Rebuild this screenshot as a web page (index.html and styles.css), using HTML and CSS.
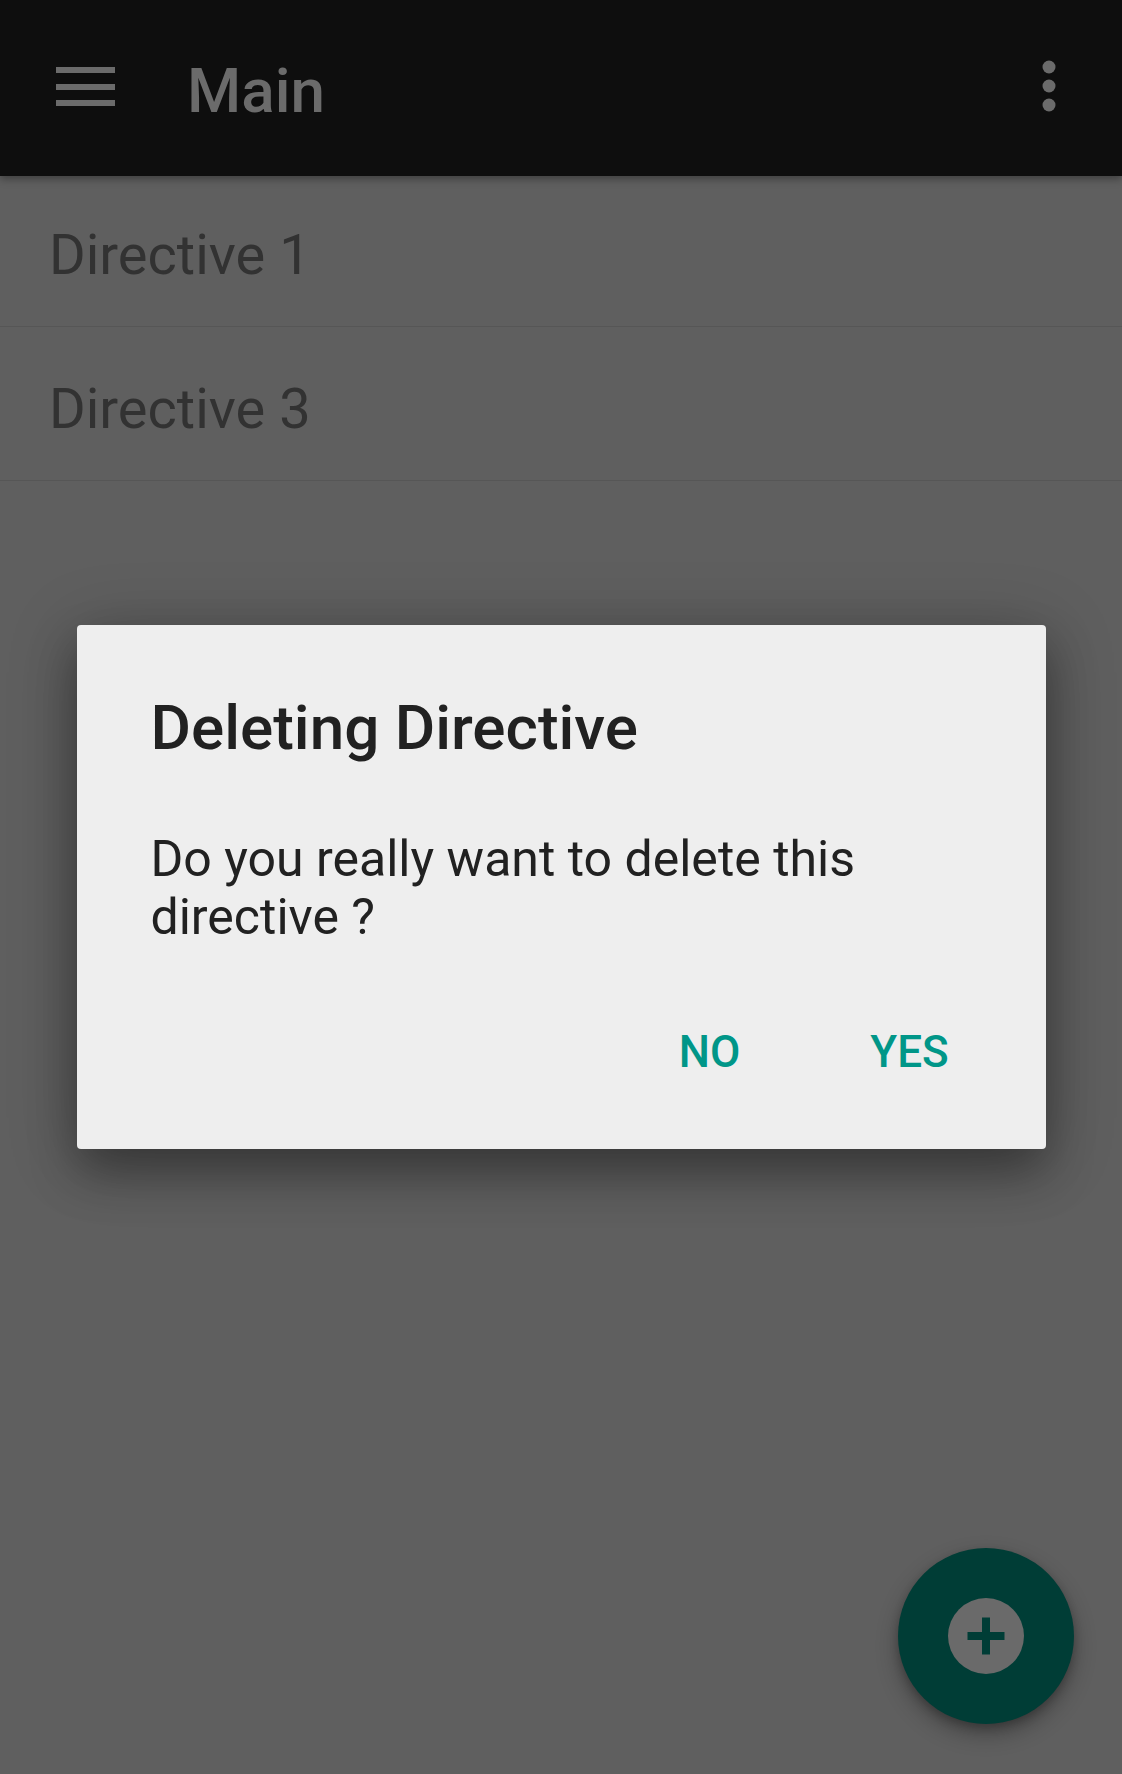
FILE: index.html
```html
<!DOCTYPE html>
<html lang="en">
<head>
<meta charset="utf-8">
<title>Main</title>
<link rel="stylesheet" href="styles.css">
</head>
<body>
<div class="app">
  <header class="toolbar">
    <svg class="menu-icon" width="60" height="40" viewBox="0 0 60 40" aria-hidden="true">
      <rect x="0" y="0" width="59" height="6" fill="#6b6b6b"/>
      <rect x="0" y="17" width="59" height="6" fill="#6b6b6b"/>
      <rect x="0" y="33" width="59" height="6" fill="#6b6b6b"/>
    </svg>
    <h1 class="toolbar-title">Main</h1>
    <svg class="more-icon" width="16" height="54" viewBox="0 0 16 54" aria-hidden="true">
      <circle cx="8" cy="8" r="6.5" fill="#6b6b6b"/>
      <circle cx="8" cy="27" r="6.5" fill="#6b6b6b"/>
      <circle cx="8" cy="46" r="6.5" fill="#6b6b6b"/>
    </svg>
  </header>
  <ul class="list">
    <li class="list-item">Directive 1</li>
    <li class="list-item">Directive 3</li>
  </ul>
</div>

<button class="fab" aria-label="Add">
  <svg width="76" height="76" viewBox="0 0 76 76" aria-hidden="true">
    <circle cx="38" cy="38" r="38" fill="#6a6a6a"/>
    <rect x="19.5" y="34" width="37" height="8" fill="#003d36"/>
    <rect x="34" y="19.5" width="8" height="37" fill="#003d36"/>
  </svg>
</button>

<div class="overlay">
  <div class="dialog" role="dialog">
    <h2 class="dialog-title">Deleting Directive</h2>
    <p class="dialog-body">Do you really want to delete this directive ?</p>
    <div class="dialog-actions">
      <button class="dialog-btn">NO</button>
      <button class="dialog-btn">YES</button>
    </div>
  </div>
</div>
</body>
</html>
```

FILE: styles.css
```css
* {
  box-sizing: border-box;
}

html, body {
  margin: 0;
  padding: 0;
}

body {
  width: 1122px;
  height: 1774px;
  background: #5f5f5f;
  font-family: Roboto, "Noto Sans", "Liberation Sans", sans-serif;
  overflow: hidden;
  position: relative;
}

.app {
  display: flex;
  flex-direction: column;
}

.toolbar {
  position: relative;
  z-index: 2;
  height: 176px;
  background: #0e0e0e;
  display: flex;
  align-items: center;
  padding: 6px 0 0 56px;
  box-shadow: 0 3px 8px rgba(0, 0, 0, 0.35);
}

.menu-icon {
  display: block;
  margin-top: -8px;
}

.toolbar-title {
  margin: 0 0 0 71px;
  font-size: 62px;
  font-weight: 500;
  line-height: 74px;
  color: #6b6b6b;
  flex: 1;
}

.more-icon {
  display: block;
  margin-right: 65px;
  margin-top: -10px;
}

.list {
  list-style: none;
  margin: -3px 0 0 0;
  padding: 0;
}

.list-item {
  height: 154px;
  border-bottom: 1px solid #565656;
  display: flex;
  align-items: center;
  padding: 10px 0 0 49px;
  font-size: 56px;
  line-height: 66px;
  color: #323232;
}

.fab {
  position: absolute;
  right: 48px;
  bottom: 50px;
  width: 176px;
  height: 176px;
  border-radius: 50%;
  border: none;
  padding: 0;
  background: #003d36;
  display: flex;
  align-items: center;
  justify-content: center;
  box-shadow: 0 10px 22px rgba(0, 0, 0, 0.3), 0 4px 8px rgba(0, 0, 0, 0.2);
}

.fab svg {
  display: block;
}

.overlay {
  position: absolute;
  inset: 0;
  z-index: 5;
  display: flex;
  align-items: center;
  justify-content: center;
}

.dialog {
  width: 969px;
  height: 524px;
  background: #eeeeee;
  border-radius: 4px;
  padding: 66px 0 0 0;
  box-shadow: 0 24px 48px rgba(0, 0, 0, 0.32), 0 8px 70px rgba(0, 0, 0, 0.22);
  display: flex;
  flex-direction: column;
}

.dialog-title {
  margin: 0;
  padding: 0 74px;
  font-size: 62px;
  font-weight: 500;
  line-height: 74px;
  color: #212121;
}

.dialog-body {
  margin: 65px 0 0 0;
  padding: 0 74px;
  font-size: 50px;
  font-weight: 400;
  line-height: 58px;
  color: #212121;
}

.dialog-actions {
  display: flex;
  justify-content: flex-end;
  padding: 0 36px 0 0;
  margin-top: 80px;
}

.dialog-btn {
  width: 200px;
  border: none;
  background: transparent;
  padding: 0;
  font-family: Roboto, "Noto Sans", "Liberation Sans", sans-serif;
  font-size: 44px;
  font-weight: 500;
  line-height: 52px;
  color: #009688;
  text-align: center;
}
```
